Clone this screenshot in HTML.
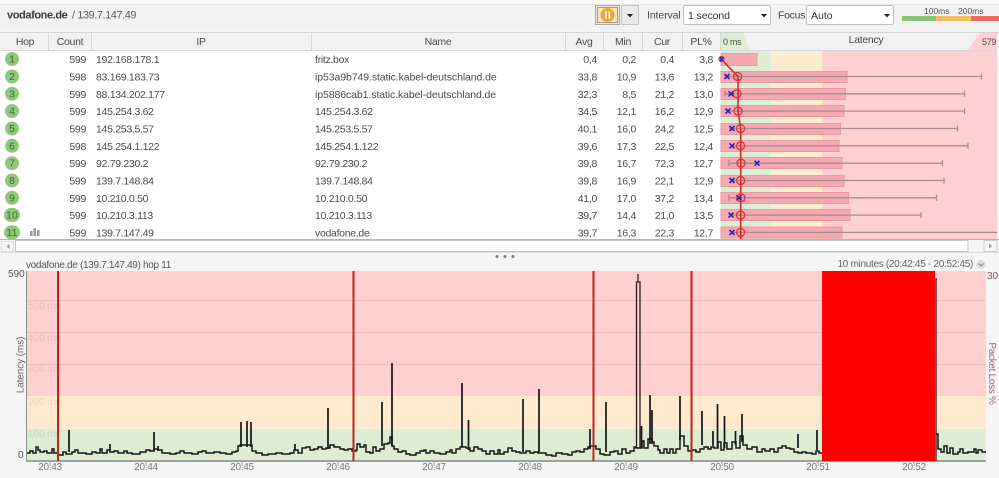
<!DOCTYPE html>
<html><head><meta charset="utf-8"><title>PingPlotter</title>
<style>
html,body{margin:0;padding:0;width:999px;height:478px;overflow:hidden;background:#f5f5f5}
svg{display:block;font-family:"Liberation Sans",sans-serif}
.t text{font-size:10.5px;fill:#4a4a4a;letter-spacing:-.3px}
.e{text-anchor:end}.c{text-anchor:middle}
</style></head><body>
<svg width="999" height="478" viewBox="0 0 999 478" xmlns="http://www.w3.org/2000/svg">
<!-- toolbar -->
<rect width="999" height="32" fill="#f2f2f2"/>
<rect y="0" width="999" height="4" fill="#f8f8f8"/>
<rect y="4" width="999" height="1" fill="#e6e6e6"/>
<rect y="25" width="590" height="1" fill="#ececec"/>
<text x="7" y="18.500" font-size="11" font-weight="bold" fill="#3a3a3a" letter-spacing="-.4">vodafone.de</text>
<text x="72" y="18.500" font-size="11" fill="#5a5a5a" letter-spacing="-.45">/ 139.7.147.49</text>
<!-- pause button -->
<rect x="595.500" y="5.500" width="24" height="19" fill="#efe6cf" stroke="#aaa"/>
<rect x="597.500" y="7.500" width="20" height="15" fill="none" stroke="#555" stroke-dasharray="1 1"/>
<circle cx="607.500" cy="15" r="7" fill="#f4a730"/>
<rect x="605" y="11.500" width="1.800" height="7" fill="#fff"/><rect x="608.400" y="11.500" width="1.800" height="7" fill="#fff"/>
<rect x="621.500" y="5.500" width="17" height="19" fill="#e9e9e9" stroke="#c4c4c4"/>
<path d="M627 14h6l-3 3.500z" fill="#222"/>
<text x="647" y="18.500" font-size="10.500" fill="#444" letter-spacing="-.1">Interval</text>
<rect x="683.500" y="5.500" width="87" height="19" rx="2" fill="#fff" stroke="#bbb"/>
<text x="688" y="19" font-size="10.500" fill="#333" letter-spacing="-.1">1 second</text>
<path d="M761 14h6l-3 3.500z" fill="#222"/>
<text x="778" y="18.500" font-size="10.500" fill="#444" letter-spacing="-.3">Focus</text>
<rect x="806.500" y="5.500" width="87" height="19" rx="2" fill="#fff" stroke="#bbb"/>
<text x="811" y="19" font-size="10.500" fill="#333">Auto</text>
<path d="M884 14h6l-3 3.500z" fill="#222"/>
<rect x="902" y="16" width="34" height="5" fill="#8cc576"/>
<rect x="936" y="16" width="35" height="5" fill="#f3bc62"/>
<rect x="971" y="16" width="28" height="5" fill="#ec6a5c"/>
<text x="924" y="14" font-size="8.500" fill="#555">100ms</text>
<text x="958" y="14" font-size="8.500" fill="#555">200ms</text>

<!-- table -->
<rect y="32" width="999" height="19" fill="#f1f1f1"/>
<rect y="32" width="999" height="1" fill="#d4d4d4"/>
<rect y="50" width="999" height="1" fill="#d8d8d8"/>
<rect y="51" width="999" height="189" fill="#fff"/>
<g fill="#d6d6d6">
<rect x="48" y="33" width="1" height="17"/><rect x="91" y="33" width="1" height="17"/><rect x="311" y="33" width="1" height="17"/><rect x="565" y="33" width="1" height="17"/><rect x="603" y="33" width="1" height="17"/><rect x="642" y="33" width="1" height="17"/><rect x="682" y="33" width="1" height="17"/><rect x="720" y="33" width="1" height="17"/>
</g>
<path d="M721 33H743L750 50H721Z" fill="#dcefd4"/>
<path d="M980 33H999V50H968Z" fill="#ffd0cf"/>
<g class="t">
<text class="c" x="25" y="45">Hop</text>
<text class="c" x="70" y="45">Count</text>
<text class="c" x="201" y="45">IP</text>
<text class="c" x="438" y="45">Name</text>
<text class="c" x="584" y="45">Avg</text>
<text class="c" x="623" y="45">Min</text>
<text class="c" x="662" y="45">Cur</text>
<text class="c" x="701" y="45">PL%</text>
<text class="c" x="866" y="43">Latency</text>
<text x="723" y="45" style="font-size:9px">0 ms</text>
<text x="982" y="45" style="font-size:9px">579</text>
</g>
<!-- latency bands -->
<rect x="721" y="51" width="50" height="189" fill="#dcefd4"/>
<rect x="771" y="51" width="51" height="189" fill="#fdeccd"/>
<rect x="822" y="51" width="175" height="189" fill="#ffd0cf"/>
<!-- bars -->
<g fill="#f7a9b2" stroke="#ea9aa3" stroke-width="1">
<rect x="721" y="53.500" width="36" height="12"/>
<rect x="721" y="71.500" width="126" height="11"/>
<rect x="721" y="88.500" width="124.500" height="11"/>
<rect x="721" y="105.500" width="123" height="11"/>
<rect x="721" y="123.500" width="119.500" height="11"/>
<rect x="721" y="140.500" width="118" height="11"/>
<rect x="721" y="157.500" width="121" height="11"/>
<rect x="721" y="175.500" width="123" height="11"/>
<rect x="721" y="192.500" width="127.500" height="11"/>
<rect x="721" y="209.500" width="129" height="11"/>
<rect x="721" y="227" width="121" height="11"/>
</g>
<!-- whiskers -->
<g stroke="#a68a90" stroke-width="1.300" fill="none">
<path d="M725 76.500H981.500M981.500 73.500v6"/>
<path d="M725 93.800H964.500M964.500 90.800v6M725 90.800v6"/>
<path d="M727 111.100H964.500M964.500 108.100v6"/>
<path d="M729 128.500H957.500M957.500 125.500v6"/>
<path d="M731 145.800H968M968 142.800v6"/>
<path d="M729 163.200H942.500M942.500 160.200v6M729 160.200v6"/>
<path d="M731 180.500H944M944 177.500v6"/>
<path d="M729 197.800H936.500M936.500 194.800v6M729 194.800v6"/>
<path d="M729 215.100H921M921 212.100v6"/>
<path d="M731 232.400H997"/>
</g>
<!-- route line -->
<path d="M721 59L738 76.500V93.800L738 111.100L740.700 128.500V240" fill="none" stroke="#d92626" stroke-width="1.600"/>
<g fill="none" stroke="#e02f2f" stroke-width="1.300">
<circle cx="721.500" cy="59" r="2.500"/>
<circle cx="737.600" cy="76.500" r="4"/><circle cx="737" cy="93.800" r="4"/><circle cx="738" cy="111.100" r="4"/><circle cx="740.600" cy="128.500" r="4"/><circle cx="740.600" cy="145.800" r="4"/><circle cx="741" cy="163.200" r="4"/><circle cx="740.600" cy="180.500" r="4"/><circle cx="741" cy="197.800" r="4"/><circle cx="740.600" cy="215.100" r="4"/><circle cx="740.600" cy="232.400" r="4"/>
</g>
<g stroke="#2a1fb8" stroke-width="1.600" fill="none">
<path d="M720 57l3 4m0-4l-3 4"/>
<path d="M724.500 74l5 5m0-5l-5 5"/>
<path d="M728.500 91.300l5 5m0-5l-5 5"/>
<path d="M725.500 108.600l5 5m0-5l-5 5"/>
<path d="M729.500 126l5 5m0-5l-5 5"/>
<path d="M729.500 143.300l5 5m0-5l-5 5"/>
<path d="M754.500 160.700l5 5m0-5l-5 5"/>
<path d="M729.500 178l5 5m0-5l-5 5"/>
<path d="M736.500 195.300l5 5m0-5l-5 5"/>
<path d="M728.500 212.600l5 5m0-5l-5 5"/>
<path d="M729.500 229.900l5 5m0-5l-5 5"/>
</g>
<!-- hop circles -->
<g fill="#8fc87c">
<circle cx="12" cy="59" r="7"/><circle cx="12" cy="76.500" r="7"/><circle cx="12" cy="93.800" r="7"/><circle cx="12" cy="111.100" r="7"/><circle cx="12" cy="128.500" r="7"/><circle cx="12" cy="145.800" r="7"/><circle cx="12" cy="163.200" r="7"/><circle cx="12" cy="180.500" r="7"/><circle cx="12" cy="197.800" r="7"/><rect x="4" y="208" width="16" height="14" rx="7"/><rect x="4" y="225.400" width="16" height="14" rx="7"/>
</g>
<g font-size="10.500" fill="#3e6b30" text-anchor="middle">
<text x="12" y="62.500">1</text><text x="12" y="80">2</text><text x="12" y="97.300">3</text><text x="12" y="114.600">4</text><text x="12" y="132">5</text><text x="12" y="149.300">6</text><text x="12" y="166.700">7</text><text x="12" y="184">8</text><text x="12" y="201.300">9</text><text x="12" y="218.600">10</text><text x="12" y="235.900">11</text>
</g>
<g fill="#9a9a9a"><rect x="30" y="231" width="2.500" height="5"/><rect x="33.500" y="228" width="2.500" height="8"/><rect x="37" y="230" width="2.500" height="6"/></g>
<!-- table text -->
<g class="t">
<text class="e" x="86" y="63">599</text><text x="96" y="63">192.168.178.1</text><text x="315" y="63">fritz.box</text><text class="e" x="597" y="63">0,4</text><text class="e" x="636" y="63">0,2</text><text class="e" x="674" y="63">0,4</text><text class="e" x="713" y="63">3,8</text>
<text class="e" x="86" y="80.500">598</text><text x="96" y="80.500">83.169.183.73</text><text x="315" y="80.500" style="letter-spacing:-.09px">ip53a9b749.static.kabel-deutschland.de</text><text class="e" x="597" y="80.500">33,8</text><text class="e" x="636" y="80.500">10,9</text><text class="e" x="674" y="80.500">13,6</text><text class="e" x="713" y="80.500">13,2</text>
<text class="e" x="86" y="97.800">599</text><text x="96" y="97.800">88.134.202.177</text><text x="315" y="97.800" style="letter-spacing:-.09px">ip5886cab1.static.kabel-deutschland.de</text><text class="e" x="597" y="97.800">32,3</text><text class="e" x="636" y="97.800">8,5</text><text class="e" x="674" y="97.800">21,2</text><text class="e" x="713" y="97.800">13,0</text>
<text class="e" x="86" y="115.100">599</text><text x="96" y="115.100">145.254.3.62</text><text x="315" y="115.100">145.254.3.62</text><text class="e" x="597" y="115.100">34,5</text><text class="e" x="636" y="115.100">12,1</text><text class="e" x="674" y="115.100">16,2</text><text class="e" x="713" y="115.100">12,9</text>
<text class="e" x="86" y="132.500">599</text><text x="96" y="132.500">145.253.5.57</text><text x="315" y="132.500">145.253.5.57</text><text class="e" x="597" y="132.500">40,1</text><text class="e" x="636" y="132.500">16,0</text><text class="e" x="674" y="132.500">24,2</text><text class="e" x="713" y="132.500">12,5</text>
<text class="e" x="86" y="149.800">598</text><text x="96" y="149.800">145.254.1.122</text><text x="315" y="149.800">145.254.1.122</text><text class="e" x="597" y="149.800">39,6</text><text class="e" x="636" y="149.800">17,3</text><text class="e" x="674" y="149.800">22,5</text><text class="e" x="713" y="149.800">12,4</text>
<text class="e" x="86" y="167.200">599</text><text x="96" y="167.200">92.79.230.2</text><text x="315" y="167.200">92.79.230.2</text><text class="e" x="597" y="167.200">39,8</text><text class="e" x="636" y="167.200">16,7</text><text class="e" x="674" y="167.200">72,3</text><text class="e" x="713" y="167.200">12,7</text>
<text class="e" x="86" y="184.500">599</text><text x="96" y="184.500">139.7.148.84</text><text x="315" y="184.500">139.7.148.84</text><text class="e" x="597" y="184.500">39,8</text><text class="e" x="636" y="184.500">16,9</text><text class="e" x="674" y="184.500">22,1</text><text class="e" x="713" y="184.500">12,9</text>
<text class="e" x="86" y="201.800">599</text><text x="96" y="201.800">10.210.0.50</text><text x="315" y="201.800">10.210.0.50</text><text class="e" x="597" y="201.800">41,0</text><text class="e" x="636" y="201.800">17,0</text><text class="e" x="674" y="201.800">37,2</text><text class="e" x="713" y="201.800">13,4</text>
<text class="e" x="86" y="219.100">599</text><text x="96" y="219.100">10.210.3.113</text><text x="315" y="219.100">10.210.3.113</text><text class="e" x="597" y="219.100">39,7</text><text class="e" x="636" y="219.100">14,4</text><text class="e" x="674" y="219.100">21,0</text><text class="e" x="713" y="219.100">13,5</text>
<text class="e" x="86" y="236.400">599</text><text x="96" y="236.400">139.7.147.49</text><text x="315" y="236.400">vodafone.de</text><text class="e" x="597" y="236.400">39,7</text><text class="e" x="636" y="236.400">16,3</text><text class="e" x="674" y="236.400">22,3</text><text class="e" x="713" y="236.400">12,7</text>
</g>
<rect x="997" y="33" width="2" height="207" fill="#f1f1f1"/>
<!-- scrollbar -->
<rect y="239" width="999" height="1" fill="#b5b5b5"/>
<rect y="240" width="999" height="13" fill="#f5f5f5"/>
<rect x="15.500" y="240.500" width="952.500" height="11" fill="#fff" stroke="#c6c6c6"/>
<rect x="1.500" y="241.500" width="12" height="10" fill="#f5f5f5" stroke="#ddd"/>
<path d="M9.500 244l-3 2.500 3 2.500z" fill="#999"/>
<rect x="984" y="240.500" width="13" height="11" fill="#f5f5f5" stroke="#ccc"/>
<path d="M989 243.500l3 2.500-3 2.500z" fill="#999"/>
<rect y="252" width="999" height="1" fill="#ddd"/>
<g fill="#777"><circle cx="497" cy="256.500" r="1.500"/><circle cx="505" cy="256.500" r="1.500"/><circle cx="513" cy="256.500" r="1.500"/></g>

<!-- graph -->
<text x="26" y="268" font-size="10" fill="#555" letter-spacing="-.32">vodafone.de (139.7.147.49) hop 11</text>
<text x="973" y="267" font-size="10" fill="#666" text-anchor="end" letter-spacing="-.3">10 minutes (20:42:45 - 20:52:45)</text>
<circle cx="981" cy="264.500" r="4.500" fill="#dcdcdc"/>
<path d="M978.500 263.500l2.500 2.500 2.500-2.500" fill="none" stroke="#888"/>
<rect x="27" y="271" width="959" height="125" fill="#ffd0cd"/>
<rect x="27" y="396" width="959" height="33" fill="#ffe9cf"/>
<rect x="27" y="429" width="959" height="32" fill="#dcedd3"/>
<g stroke="#f0bcb8" stroke-width="1"><path d="M27 300.500H986M27 332.500H986M27 364.500H986"/></g>
<g font-size="10" fill="#f2bdb8"><text x="28" y="309">500 ms</text><text x="28" y="341">400 ms</text><text x="28" y="372">300 ms</text><text x="28" y="405" fill="#f0d9bc">200 ms</text><text x="28" y="437" fill="#cadcbf">100 ms</text></g>
<rect x="26" y="271" width="1" height="191" fill="#8a8a8a"/>
<rect x="26" y="460" width="960" height="2" fill="#9aa396"/>
<g stroke="#999"><path d="M50 461v3M146 461v3M242 461v3M338 461v3M434 461v3M530 461v3M626 461v3M722 461v3M818 461v3M914 461v3"/></g>
<g font-size="10" fill="#777" text-anchor="middle" letter-spacing="-.3">
<text x="50" y="470">20:43</text><text x="146" y="470">20:44</text><text x="242" y="470">20:45</text><text x="338" y="470">20:46</text><text x="434" y="470">20:47</text><text x="530" y="470">20:48</text><text x="626" y="470">20:49</text><text x="722" y="470">20:50</text><text x="818" y="470">20:51</text><text x="914" y="470">20:52</text>
</g>
<text x="8" y="277" font-size="10" fill="#555">590</text>
<text x="18" y="458" font-size="10" fill="#555">0</text>
<text transform="translate(23.500 365) rotate(-90)" font-size="10" fill="#666" text-anchor="middle" letter-spacing="-.1">Latency (ms)</text>
<text x="987" y="279" font-size="10" fill="#a04a62">30</text>
<text transform="translate(989 373.500) rotate(90)" font-size="10" fill="#a8607a" text-anchor="middle" letter-spacing="-.3">Packet Loss %</text>
<!-- trace -->
<path fill="none" stroke="#151515" stroke-width="1.500" d="M27 453H30V451H33V453H36V447H38V450H40V452H44V451H47V453H52V449H54V453H58V455H63V452H66V454H72V452H75V450H78V453H86V454H92V452H96V453H100V449H102V453H107V450H110V452H114V451H118V453H124V451H127V453H132V454H140V452H146V450H150V451H154V449H158V450H162V453H170V454H176V453H180V451H184V453H192V454H198V452H202V451H206V453H214V452H220V453H226V454H232V452H236V451H238V446H240V445H252V451H256V453H262V455H268V454H276V453H282V454H290V453H294V450H298V453H302V448H306V447H310V450H314V449H318V447H322V449H326V448H330V445H334V447H340V449H344V450H348V449H352V451H356V450H357V444H360V447H364V445H366V452H370V453H373V447H376V451H380V449H384V444H388V443H390V437H392V446H394V449H398V452H402V451H406V454H410V455H416V453H420V451H424V450H426V453H430V451H434V453H440V454H446V452H450V450H452V453H456V449H460V447H466V448H470V451H474V447H478V449H482V451H486V454H490V451H494V454H498V450H500V454H504V452H508V448H512V451H516V452H520V453H526V451H530V453H534V452H538V453H546V455H552V456H556V453H562V454H568V455H572V452H576V451H580V452H584V449H588V447H590V446H596V449H600V454H604V455H610V452H614V451H618V454H622V449H626V453H630V451H634V447H636V448H642V441H644V448H648V439H652V442H654V446H658V450H660V453H664V449H667V453H670V449H673V453H676V449H680V436H684V446H688V451H692V450H696V452H700V449H704V447H708V449H711V447H714V448H718V442H721V450H724V443H727V449H732V442H736V448H740V436H743V445H747V449H752V447H757V452H762V449H765V451H770V449H774V452H778V448H782V446H786V448H790V449H794V452H798V453H802V452H806V453H812V454H816V451H819V453H822"/>
<path fill="none" stroke="#151515" stroke-width="1.500" d="M936 434H938V449H941V452H944V446H947V453H950V448H953V454H958V452H960V449H963V453H968V452H974V449H976V453H978V450H982V452H986"/>
<path fill="none" stroke="#151515" stroke-width="1.700" d="M69 452V430M110 450V444M154 451V432M158 451V446M241 447V422M247 447V421M251 447V422M295 450V444M328 449V408M382 446V402M392 446V363M462 447V383M468.500 450V420M523 452V399M539 452V389M590 449V429M606 452V402M641.500 448V426M650 444V395M652 444V410M680 440V396M702 445V411M713 446V431M717.500 447V404M724.500 448V416M735.500 445V431M742 442V414M798 448V434M817 450V430"/>
<path fill="none" stroke="#2a1c1c" stroke-width="1.300" d="M636.500 448V282H638V274M640 448V282H638"/>
<path d="M936 461V279H937" fill="none" stroke="#2a1c1c" stroke-width="1.300"/>
<!-- packet loss -->
<rect x="822" y="271" width="113" height="190" fill="#fe0000"/>
<g fill="#c4201f"><rect x="57" y="271" width="2" height="190"/><rect x="352.500" y="271" width="2" height="190"/><rect x="592.500" y="271" width="2" height="190"/><rect x="690.500" y="271" width="2" height="190"/></g>
</svg>
</body></html>
